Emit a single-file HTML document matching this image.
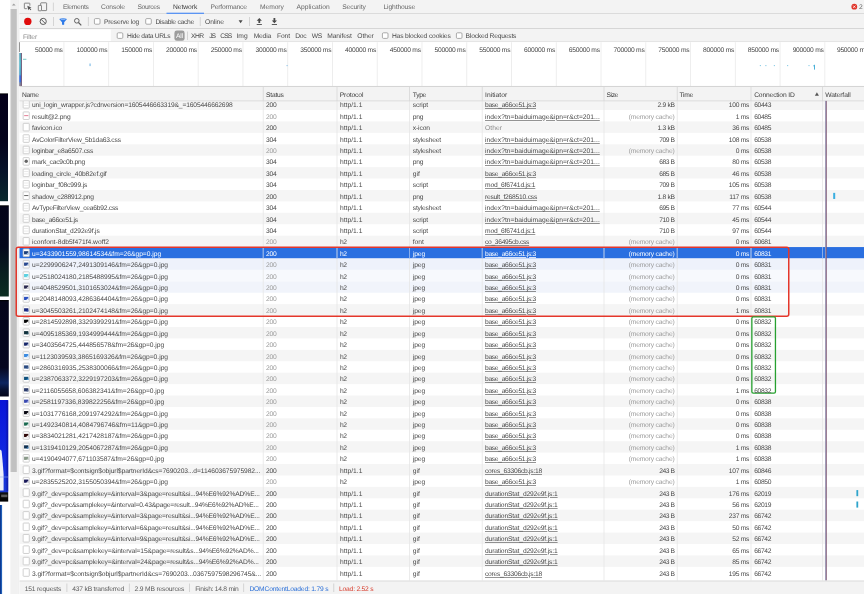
<!DOCTYPE html>
<html><head><meta charset="utf-8"><title>DevTools - Network</title>
<style>
html,body{margin:0;padding:0;background:#fff;}
body{width:864px;height:594px;overflow:hidden;position:relative;font-family:"Liberation Sans",sans-serif;font-size:6.7px;}
#r{position:absolute;left:0;top:0;width:864px;height:594px;overflow:hidden;text-rendering:geometricPrecision;will-change:transform;}
#r svg{position:absolute;left:0;top:0;}
#r div{position:absolute;line-height:10px;height:10px;white-space:pre;}
#r div.u{text-decoration:underline;text-decoration-thickness:0.5px;text-underline-offset:0.7px;text-decoration-color:rgba(60,60,60,.55);}
#r div.s{text-decoration-color:rgba(255,255,255,.8);}
</style></head><body><div id="r">
<svg width="864" height="594" viewBox="0 0 864 594"><defs><linearGradient id="g1" x1="0" y1="0" x2="0" y2="1"><stop offset="0" stop-color="#000"/><stop offset="0.015" stop-color="#04001a"/><stop offset="0.45" stop-color="#05031c"/><stop offset="0.7" stop-color="#07122a"/><stop offset="1" stop-color="#0a2a2e"/></linearGradient><linearGradient id="g2" x1="0" y1="0" x2="0" y2="1"><stop offset="0" stop-color="#000"/><stop offset="0.02" stop-color="#04051a"/><stop offset="0.45" stop-color="#05081c"/><stop offset="0.75" stop-color="#08201f"/><stop offset="1" stop-color="#0c2e22"/></linearGradient><linearGradient id="g3" x1="0" y1="0" x2="0" y2="1"><stop offset="0" stop-color="#000"/><stop offset="0.02" stop-color="#04041a"/><stop offset="0.7" stop-color="#060720"/><stop offset="0.86" stop-color="#0d2560"/><stop offset="0.93" stop-color="#071030"/><stop offset="1" stop-color="#03051a"/></linearGradient><linearGradient id="g4" x1="0" y1="0" x2="0" y2="1"><stop offset="0" stop-color="#0a14d8"/><stop offset="0.45" stop-color="#1024e0"/><stop offset="0.9" stop-color="#1a3ad8"/><stop offset="0.915" stop-color="#101010"/><stop offset="1" stop-color="#000"/></linearGradient><linearGradient id="g5" x1="0" y1="0" x2="1" y2="0"><stop offset="0" stop-color="#0a2a80"/><stop offset="0.5" stop-color="#0d4aa8"/><stop offset="1" stop-color="#3a7ac8"/></linearGradient><linearGradient id="g6" x1="0" y1="0" x2="1" y2="0"><stop offset="0" stop-color="rgba(8,12,150,0)"/><stop offset="1" stop-color="rgba(8,12,150,.75)"/></linearGradient><linearGradient id="g7" x1="0" y1="0" x2="0" y2="1"><stop offset="0" stop-color="#5aa0b8"/><stop offset="0.3" stop-color="#58b8c8"/><stop offset="0.65" stop-color="#4aa0c8"/><stop offset="0.7" stop-color="#3a6ad8"/><stop offset="0.87" stop-color="#3a6ad8"/><stop offset="0.9" stop-color="#6a80a0"/><stop offset="1" stop-color="#8a7a8a"/></linearGradient></defs>
<rect x="0" y="93.4" width="8" height="107.8" fill="url(#g1)"/>
<rect x="0" y="205.3" width="8.8" height="91.2" fill="url(#g2)"/>
<rect x="0" y="300" width="8.8" height="96.5" fill="url(#g3)"/>
<rect x="0" y="400" width="8.2" height="101.6" fill="url(#g4)"/>
<rect x="0" y="505" width="2.1" height="89" fill="url(#g5)"/>
<rect x="5.2" y="400.6" width="3" height="90.8" fill="url(#g6)"/>
<path d="M0 449.5L1.6 450.8L2.5 460L3.6 474V490.6H0Z" fill="#eef0f8"/>
<rect x="0" y="476.6" width="8.2" height="0.8" fill="#8aa6f0" opacity="0.7"/>
<rect x="1.2" y="494.6" width="6.2" height="2.6" fill="#9a9a9a" opacity="0.55"/>
<rect x="10.4" y="0" width="6.8" height="594" fill="#f1f1f1"/>
<rect x="10.4" y="9" width="6.8" height="463" fill="#d2d2d2"/>
<rect x="11.2" y="9" width="5.2" height="463" fill="#c1c1c1"/>
<path d="M11.9 5.6 L13.8 3.6 L15.7 5.6 Z" fill="#a0a0a0"/>
<rect x="17.2" y="0" width="2.3" height="594" fill="#f0f0f0"/>
<rect x="19.5" y="0" width="844.5" height="594" fill="#fff"/>
<rect x="19.5" y="0" width="844.5" height="13.8" fill="#f3f3f3"/>
<rect x="19.5" y="13.35" width="844.5" height="0.9" fill="#cccccc"/>
<g transform="translate(23.7 2.5) scale(.933)" fill="none"><path d="M6.6 3.4V1.2a.5.5 0 0 0-.5-.5H1.2a.5.5 0 0 0-.5.5v4.9a.5.5 0 0 0 .5.5h2.2" stroke="#6a6a6a" stroke-width=".85"/>
<path d="M3.9 3.6l.9 4.6 1.1-1.5 1.5 1.7.8-.7-1.5-1.7 1.7-.6z" fill="#555"/></g>
<g transform="translate(37.6 2.2)" fill="none"><path d="M3.1 3V1.1a.5.5 0 0 1 .5-.5h4.9a.5.5 0 0 1 .5.5v6.8a.5.5 0 0 1-.5.5H4.2" stroke="#6a6a6a" stroke-width=".8"/>
<rect x=".7" y="3.2" width="3.2" height="5.4" rx=".5" stroke="#6a6a6a" stroke-width=".8"/></g>
<rect x="52.9" y="2.6" width="0.8" height="8.4" fill="#cccccc"/>
<rect x="166.5" y="12.7" width="37.5" height="1.2" fill="#4d8df6"/>
<circle cx="854.3" cy="6.7" r="2.9" fill="#e0352b"/><path d="M853.2 5.6L855.4 7.8M855.4 5.6L853.2 7.8" stroke="#fff" stroke-width=".8"/>
<rect x="19.5" y="14.25" width="844.5" height="14.4" fill="#f3f3f3"/>
<rect x="19.5" y="28.25" width="844.5" height="0.9" fill="#cccccc"/>
<circle cx="27.8" cy="21.4" r="3.7" fill="#e00b0b"/>
<circle cx="43.2" cy="21.4" r="3.1" fill="none" stroke="#555" stroke-width=".95"/><path d="M41.1 19.3L45.3 23.5" stroke="#555" stroke-width=".95"/>
<rect x="53.2" y="17" width="0.8" height="9" fill="#cccccc"/>
<g transform="translate(59 18)"><path d="M.2 .9 Q4.1 -.6 8 .9 L5.2 4.2 V6.6 Q4.1 7.4 3 6.6 V4.2 Z" fill="#2f7be8"/><ellipse cx="4.1" cy="1.2" rx="2.6" ry=".55" fill="#9cc2f7"/></g>
<g transform="translate(73.6 17.6)" fill="none"><circle cx="3.2" cy="3.2" r="2.3" stroke="#5a5a5a" stroke-width=".95"/><path d="M4.9 4.9L7.7 7.7" stroke="#5a5a5a" stroke-width="1.15"/></g>
<rect x="87.9" y="17" width="0.8" height="9" fill="#cccccc"/>
<rect x="94.4" y="18.6" width="5.6" height="5.6" fill="#fff" rx="1.1" stroke="#959595" stroke-width="0.8"/>
<rect x="145.7" y="18.6" width="5.6" height="5.6" fill="#fff" rx="1.1" stroke="#959595" stroke-width="0.8"/>
<rect x="199.8" y="17" width="0.8" height="9" fill="#cccccc"/>
<path d="M238.6 20.2H242.6L240.6 23.2Z" fill="#4a4a4a"/>
<rect x="249.1" y="17" width="0.8" height="9" fill="#cccccc"/>
<g transform="translate(256.3 17.8)" fill="#4a4a4a"><path d="M3 .2L5.6 3H3.9V5.3H2.1V3H.4Z"/><rect x=".4" y="6.3" width="5.2" height=".9"/></g>
<g transform="translate(271.4 17.8)" fill="#4a4a4a"><path d="M3 5.4L5.6 2.6H3.9V.3H2.1V2.6H.4Z"/><rect x=".4" y="6.3" width="5.2" height=".9"/></g>
<rect x="19.5" y="29.15" width="844.5" height="12.6" fill="#f3f3f3"/>
<rect x="20" y="29.4" width="90.8" height="12" fill="#fff"/>
<rect x="19.5" y="41.4" width="844.5" height="0.8" fill="#dadada"/>
<rect x="117.2" y="32.8" width="5.6" height="5.6" fill="#fff" rx="1.1" stroke="#959595" stroke-width="0.8"/>
<rect x="174.4" y="30.6" width="10.2" height="10.2" fill="#9d9d9d" rx="2.4"/>
<rect x="187.2" y="31.5" width="0.8" height="8.5" fill="#cccccc"/>
<rect x="382.4" y="32.8" width="5.6" height="5.6" fill="#fff" rx="1.1" stroke="#959595" stroke-width="0.8"/>
<rect x="456.4" y="32.8" width="5.6" height="5.6" fill="#fff" rx="1.1" stroke="#959595" stroke-width="0.8"/>
<rect x="19.5" y="42.2" width="844.5" height="44" fill="#fff"/>
<rect x="63.46" y="42.2" width="0.9" height="44" fill="#ececec"/>
<rect x="108.22" y="42.2" width="0.9" height="44" fill="#ececec"/>
<rect x="152.98" y="42.2" width="0.9" height="44" fill="#ececec"/>
<rect x="197.74" y="42.2" width="0.9" height="44" fill="#ececec"/>
<rect x="242.5" y="42.2" width="0.9" height="44" fill="#ececec"/>
<rect x="287.26" y="42.2" width="0.9" height="44" fill="#ececec"/>
<rect x="332.02" y="42.2" width="0.9" height="44" fill="#ececec"/>
<rect x="376.78" y="42.2" width="0.9" height="44" fill="#ececec"/>
<rect x="421.54" y="42.2" width="0.9" height="44" fill="#ececec"/>
<rect x="466.3" y="42.2" width="0.9" height="44" fill="#ececec"/>
<rect x="511.06" y="42.2" width="0.9" height="44" fill="#ececec"/>
<rect x="555.82" y="42.2" width="0.9" height="44" fill="#ececec"/>
<rect x="600.58" y="42.2" width="0.9" height="44" fill="#ececec"/>
<rect x="645.34" y="42.2" width="0.9" height="44" fill="#ececec"/>
<rect x="690.1" y="42.2" width="0.9" height="44" fill="#ececec"/>
<rect x="734.86" y="42.2" width="0.9" height="44" fill="#ececec"/>
<rect x="779.62" y="42.2" width="0.9" height="44" fill="#ececec"/>
<rect x="824.38" y="42.2" width="0.9" height="44" fill="#ececec"/>
<rect x="19.1" y="42.2" width="0.7" height="9.8" fill="#6a6a6a"/>
<rect x="19.2" y="53" width="2.1" height="33" fill="url(#g7)"/>
<rect x="21.2" y="53" width="0.75" height="33" fill="#5a3a5e"/>
<rect x="23" y="58.8" width="3.4" height="0.9" fill="#6cc4c0"/>
<rect x="89.6" y="63.5" width="0.9" height="2.6" fill="#58a8e0"/>
<rect x="286.6" y="65.2" width="0.9" height="0.9" fill="#58a8e0"/>
<rect x="759.85" y="65.2" width="0.9" height="0.9" fill="#4ab0d8"/>
<rect x="765.45" y="65.2" width="0.9" height="0.9" fill="#4ab0d8"/>
<rect x="773.85" y="65.2" width="0.9" height="0.9" fill="#4ab0d8"/>
<rect x="787.25" y="65.2" width="0.9" height="0.9" fill="#4ab0d8"/>
<rect x="808.55" y="65.2" width="0.9" height="0.9" fill="#4ab0d8"/>
<rect x="814" y="64.8" width="1" height="4.8" fill="#4ab0d8"/>
<rect x="813.2" y="65.4" width="0.9" height="0.9" fill="#4ab0d8"/>
<rect x="19.5" y="98.6" width="844.5" height="11.42" fill="#f5f5f5"/>
<rect x="19.5" y="121.44" width="844.5" height="11.42" fill="#f5f5f5"/>
<rect x="19.5" y="144.28" width="844.5" height="11.42" fill="#f5f5f5"/>
<rect x="19.5" y="167.12" width="844.5" height="11.42" fill="#f5f5f5"/>
<rect x="19.5" y="189.96" width="844.5" height="11.42" fill="#f5f5f5"/>
<rect x="19.5" y="212.8" width="844.5" height="11.42" fill="#f5f5f5"/>
<rect x="19.5" y="235.64" width="844.5" height="11.42" fill="#f5f5f5"/>
<rect x="19.5" y="247.06" width="844.5" height="11.42" fill="#2a6fe0"/>
<rect x="19.5" y="258.48" width="844.5" height="11.42" fill="#eef2fb"/>
<rect x="19.5" y="269.9" width="844.5" height="11.42" fill="#f7f9fd"/>
<rect x="19.5" y="281.32" width="844.5" height="11.42" fill="#f1f4fb"/>
<rect x="19.5" y="304.16" width="844.5" height="11.42" fill="#f5f5f5"/>
<rect x="19.5" y="327" width="844.5" height="11.42" fill="#f5f5f5"/>
<rect x="19.5" y="349.84" width="844.5" height="11.42" fill="#f5f5f5"/>
<rect x="19.5" y="372.68" width="844.5" height="11.42" fill="#f5f5f5"/>
<rect x="19.5" y="395.52" width="844.5" height="11.42" fill="#f5f5f5"/>
<rect x="19.5" y="418.36" width="844.5" height="11.42" fill="#f5f5f5"/>
<rect x="19.5" y="441.2" width="844.5" height="11.42" fill="#f5f5f5"/>
<rect x="19.5" y="464.04" width="844.5" height="11.42" fill="#f5f5f5"/>
<rect x="19.5" y="486.88" width="844.5" height="11.42" fill="#f5f5f5"/>
<rect x="19.5" y="509.72" width="844.5" height="11.42" fill="#f5f5f5"/>
<rect x="19.5" y="532.56" width="844.5" height="11.42" fill="#f5f5f5"/>
<rect x="19.5" y="555.4" width="844.5" height="11.42" fill="#f5f5f5"/>
<rect x="262.8" y="100.9" width="0.8" height="479.7" fill="#e6e6e6"/>
<rect x="262.8" y="247.06" width="0.8" height="11.42" fill="#7aa5ec"/>
<rect x="336.6" y="100.9" width="0.8" height="479.7" fill="#e6e6e6"/>
<rect x="336.6" y="247.06" width="0.8" height="11.42" fill="#7aa5ec"/>
<rect x="409.2" y="100.9" width="0.8" height="479.7" fill="#e6e6e6"/>
<rect x="409.2" y="247.06" width="0.8" height="11.42" fill="#7aa5ec"/>
<rect x="481.8" y="100.9" width="0.8" height="479.7" fill="#e6e6e6"/>
<rect x="481.8" y="247.06" width="0.8" height="11.42" fill="#7aa5ec"/>
<rect x="603.6" y="100.9" width="0.8" height="479.7" fill="#e6e6e6"/>
<rect x="603.6" y="247.06" width="0.8" height="11.42" fill="#7aa5ec"/>
<rect x="676.8" y="100.9" width="0.8" height="479.7" fill="#e6e6e6"/>
<rect x="676.8" y="247.06" width="0.8" height="11.42" fill="#7aa5ec"/>
<rect x="750.6" y="100.9" width="0.8" height="479.7" fill="#e6e6e6"/>
<rect x="750.6" y="247.06" width="0.8" height="11.42" fill="#7aa5ec"/>
<rect x="822.2" y="100.9" width="0.8" height="479.7" fill="#e6e6e6"/>
<rect x="822.2" y="247.06" width="0.8" height="11.42" fill="#7aa5ec"/>
<rect x="23.15" y="100.5" width="6.1" height="7.6" fill="#fff" rx="0.6" stroke="#c4c4c4" stroke-width="0.8"/>
<rect x="24.05" y="102.7" width="4.3" height="0.7" fill="#e2e2e2"/>
<rect x="24.05" y="105.1" width="4.3" height="0.7" fill="#e2e2e2"/>
<rect x="23.15" y="111.92" width="6.1" height="7.6" fill="#fff" rx="0.6" stroke="#c4c4c4" stroke-width="0.8"/>
<rect x="24.15" y="115.22" width="4.2" height="0.9" fill="#e0708a"/>
<rect x="23.15" y="123.34" width="6.1" height="7.6" fill="#fff" rx="0.6" stroke="#c4c4c4" stroke-width="0.8"/>
<rect x="23.15" y="134.76" width="6.1" height="7.6" fill="#fff" rx="0.6" stroke="#c4c4c4" stroke-width="0.8"/>
<rect x="24.05" y="136.96" width="4.3" height="0.7" fill="#e2e2e2"/>
<rect x="24.05" y="139.36" width="4.3" height="0.7" fill="#e2e2e2"/>
<rect x="23.15" y="146.18" width="6.1" height="7.6" fill="#fff" rx="0.6" stroke="#c4c4c4" stroke-width="0.8"/>
<rect x="24.05" y="148.38" width="4.3" height="0.7" fill="#e2e2e2"/>
<rect x="24.05" y="150.78" width="4.3" height="0.7" fill="#e2e2e2"/>
<rect x="23.15" y="157.6" width="6.1" height="7.6" fill="#fff" rx="0.6" stroke="#c4c4c4" stroke-width="0.8"/>
<circle cx="26.2" cy="161.3" r="1.7" fill="#666"/>
<rect x="23.15" y="169.02" width="6.1" height="7.6" fill="#fff" rx="0.6" stroke="#c4c4c4" stroke-width="0.8"/>
<rect x="24.05" y="171.22" width="4.3" height="0.7" fill="#e2e2e2"/>
<rect x="24.05" y="173.62" width="4.3" height="0.7" fill="#e2e2e2"/>
<rect x="23.15" y="180.44" width="6.1" height="7.6" fill="#fff" rx="0.6" stroke="#c4c4c4" stroke-width="0.8"/>
<rect x="24.05" y="182.64" width="4.3" height="0.7" fill="#e2e2e2"/>
<rect x="24.05" y="185.04" width="4.3" height="0.7" fill="#e2e2e2"/>
<rect x="23.15" y="191.86" width="6.1" height="7.6" fill="#fff" rx="0.6" stroke="#c4c4c4" stroke-width="0.8"/>
<rect x="24.15" y="195.16" width="4.2" height="0.9" fill="#555"/>
<rect x="23.15" y="203.28" width="6.1" height="7.6" fill="#fff" rx="0.6" stroke="#c4c4c4" stroke-width="0.8"/>
<rect x="24.05" y="205.48" width="4.3" height="0.7" fill="#e2e2e2"/>
<rect x="24.05" y="207.88" width="4.3" height="0.7" fill="#e2e2e2"/>
<rect x="23.15" y="214.7" width="6.1" height="7.6" fill="#fff" rx="0.6" stroke="#c4c4c4" stroke-width="0.8"/>
<rect x="24.05" y="216.9" width="4.3" height="0.7" fill="#e2e2e2"/>
<rect x="24.05" y="219.3" width="4.3" height="0.7" fill="#e2e2e2"/>
<rect x="23.15" y="226.12" width="6.1" height="7.6" fill="#fff" rx="0.6" stroke="#c4c4c4" stroke-width="0.8"/>
<rect x="24.05" y="228.32" width="4.3" height="0.7" fill="#e2e2e2"/>
<rect x="24.05" y="230.72" width="4.3" height="0.7" fill="#e2e2e2"/>
<rect x="23.15" y="237.54" width="6.1" height="7.6" fill="#fff" rx="0.6" stroke="#c4c4c4" stroke-width="0.8"/>
<rect x="23.15" y="248.96" width="6.1" height="7.6" fill="#fff" rx="0.6" stroke="#c4c4c4" stroke-width="0.8"/>
<rect x="24.05" y="251.16" width="4.3" height="3.2" fill="#1d3f7a"/>
<path d="M28.35 252.36V254.36H26.15Z" fill="#9fc0e8"/>
<rect x="23.15" y="260.38" width="6.1" height="7.6" fill="#fff" rx="0.6" stroke="#c4c4c4" stroke-width="0.8"/>
<rect x="24.05" y="262.58" width="4.3" height="3.2" fill="#2a4a90"/>
<path d="M28.35 263.78V265.78H26.15Z" fill="#dfe8f6"/>
<rect x="23.15" y="271.8" width="6.1" height="7.6" fill="#fff" rx="0.6" stroke="#c4c4c4" stroke-width="0.8"/>
<rect x="24.05" y="274" width="4.3" height="3.2" fill="#5cd0e0"/>
<path d="M28.35 275.2V277.2H26.15Z" fill="#c8f2f6"/>
<rect x="23.15" y="283.22" width="6.1" height="7.6" fill="#fff" rx="0.6" stroke="#c4c4c4" stroke-width="0.8"/>
<rect x="24.05" y="285.42" width="4.3" height="3.2" fill="#2a2a50"/>
<path d="M28.35 286.62V288.62H26.15Z" fill="#ffffff"/>
<rect x="23.15" y="294.64" width="6.1" height="7.6" fill="#fff" rx="0.6" stroke="#c4c4c4" stroke-width="0.8"/>
<rect x="24.05" y="296.84" width="4.3" height="3.2" fill="#2a50c0"/>
<path d="M28.35 298.04V300.04H26.15Z" fill="#e8eefc"/>
<rect x="23.15" y="306.06" width="6.1" height="7.6" fill="#fff" rx="0.6" stroke="#c4c4c4" stroke-width="0.8"/>
<rect x="24.05" y="308.26" width="4.3" height="3.2" fill="#1a2a80"/>
<path d="M28.35 309.46V311.46H26.15Z" fill="#3a50b0"/>
<rect x="23.15" y="317.48" width="6.1" height="7.6" fill="#fff" rx="0.6" stroke="#c4c4c4" stroke-width="0.8"/>
<rect x="24.05" y="319.68" width="4.3" height="3.2" fill="#050505"/>
<path d="M28.35 320.88V322.88H26.15Z" fill="#ffffff"/>
<rect x="23.15" y="328.9" width="6.1" height="7.6" fill="#fff" rx="0.6" stroke="#c4c4c4" stroke-width="0.8"/>
<rect x="24.05" y="331.1" width="4.3" height="3.2" fill="#10303a"/>
<path d="M28.35 332.3V334.3H26.15Z" fill="#205060"/>
<rect x="23.15" y="340.32" width="6.1" height="7.6" fill="#fff" rx="0.6" stroke="#c4c4c4" stroke-width="0.8"/>
<rect x="24.05" y="342.52" width="4.3" height="3.2" fill="#18286a"/>
<path d="M28.35 343.72V345.72H26.15Z" fill="#dfe6f6"/>
<rect x="23.15" y="351.74" width="6.1" height="7.6" fill="#fff" rx="0.6" stroke="#c4c4c4" stroke-width="0.8"/>
<rect x="24.05" y="353.94" width="4.3" height="3.2" fill="#3a8ae0"/>
<path d="M28.35 355.14V357.14H26.15Z" fill="#cfe4fa"/>
<rect x="23.15" y="363.16" width="6.1" height="7.6" fill="#fff" rx="0.6" stroke="#c4c4c4" stroke-width="0.8"/>
<rect x="24.05" y="365.36" width="4.3" height="3.2" fill="#2a4a80"/>
<path d="M28.35 366.56V368.56H26.15Z" fill="#4a6aa0"/>
<rect x="23.15" y="374.58" width="6.1" height="7.6" fill="#fff" rx="0.6" stroke="#c4c4c4" stroke-width="0.8"/>
<rect x="24.05" y="376.78" width="4.3" height="3.2" fill="#10507a"/>
<path d="M28.35 377.98V379.98H26.15Z" fill="#3a90d0"/>
<rect x="23.15" y="386" width="6.1" height="7.6" fill="#fff" rx="0.6" stroke="#c4c4c4" stroke-width="0.8"/>
<rect x="24.05" y="388.2" width="4.3" height="3.2" fill="#2a3a6a"/>
<path d="M28.35 389.4V391.4H26.15Z" fill="#6a7aa0"/>
<rect x="23.15" y="397.42" width="6.1" height="7.6" fill="#fff" rx="0.6" stroke="#c4c4c4" stroke-width="0.8"/>
<rect x="24.05" y="399.62" width="4.3" height="3.2" fill="#3a4ab0"/>
<path d="M28.35 400.82V402.82H26.15Z" fill="#c0c8f0"/>
<rect x="23.15" y="408.84" width="6.1" height="7.6" fill="#fff" rx="0.6" stroke="#c4c4c4" stroke-width="0.8"/>
<rect x="24.05" y="411.04" width="4.3" height="3.2" fill="#060610"/>
<path d="M28.35 412.24V414.24H26.15Z" fill="#ffffff"/>
<rect x="23.15" y="420.26" width="6.1" height="7.6" fill="#fff" rx="0.6" stroke="#c4c4c4" stroke-width="0.8"/>
<rect x="24.05" y="422.46" width="4.3" height="3.2" fill="#1a6a50"/>
<path d="M28.35 423.66V425.66H26.15Z" fill="#ffffff"/>
<rect x="23.15" y="431.68" width="6.1" height="7.6" fill="#fff" rx="0.6" stroke="#c4c4c4" stroke-width="0.8"/>
<rect x="24.05" y="433.88" width="4.3" height="3.2" fill="#300808"/>
<path d="M28.35 435.08V437.08H26.15Z" fill="#ffffff"/>
<rect x="23.15" y="443.1" width="6.1" height="7.6" fill="#fff" rx="0.6" stroke="#c4c4c4" stroke-width="0.8"/>
<rect x="24.05" y="445.3" width="4.3" height="3.2" fill="#103050"/>
<path d="M28.35 446.5V448.5H26.15Z" fill="#3a80c0"/>
<rect x="23.15" y="454.52" width="6.1" height="7.6" fill="#fff" rx="0.6" stroke="#c4c4c4" stroke-width="0.8"/>
<rect x="24.05" y="456.72" width="4.3" height="3.2" fill="#8a9a8a"/>
<path d="M28.35 457.92V459.92H26.15Z" fill="#c8d0c8"/>
<rect x="23.15" y="465.94" width="6.1" height="7.6" fill="#fff" rx="0.6" stroke="#c4c4c4" stroke-width="0.8"/>
<rect x="23.15" y="477.36" width="6.1" height="7.6" fill="#fff" rx="0.6" stroke="#c4c4c4" stroke-width="0.8"/>
<rect x="24.05" y="479.56" width="4.3" height="3.2" fill="#1a1a5a"/>
<path d="M28.35 480.76V482.76H26.15Z" fill="#ffffff"/>
<rect x="23.15" y="488.78" width="6.1" height="7.6" fill="#fff" rx="0.6" stroke="#c4c4c4" stroke-width="0.8"/>
<rect x="23.15" y="500.2" width="6.1" height="7.6" fill="#fff" rx="0.6" stroke="#c4c4c4" stroke-width="0.8"/>
<rect x="23.15" y="511.62" width="6.1" height="7.6" fill="#fff" rx="0.6" stroke="#c4c4c4" stroke-width="0.8"/>
<rect x="23.15" y="523.04" width="6.1" height="7.6" fill="#fff" rx="0.6" stroke="#c4c4c4" stroke-width="0.8"/>
<rect x="23.15" y="534.46" width="6.1" height="7.6" fill="#fff" rx="0.6" stroke="#c4c4c4" stroke-width="0.8"/>
<rect x="23.15" y="545.88" width="6.1" height="7.6" fill="#fff" rx="0.6" stroke="#c4c4c4" stroke-width="0.8"/>
<rect x="23.15" y="557.3" width="6.1" height="7.6" fill="#fff" rx="0.6" stroke="#c4c4c4" stroke-width="0.8"/>
<rect x="23.15" y="568.72" width="6.1" height="7.6" fill="#fff" rx="0.6" stroke="#c4c4c4" stroke-width="0.8"/>
<rect x="19.5" y="86.4" width="844.5" height="14.5" fill="#f3f3f3"/>
<rect x="19.5" y="85.95" width="844.5" height="0.9" fill="#cfcfcf"/>
<rect x="19.5" y="100.5" width="844.5" height="0.8" fill="#d8d8d8"/>
<rect x="262.8" y="86.4" width="0.8" height="14.5" fill="#d6d6d6"/>
<rect x="336.6" y="86.4" width="0.8" height="14.5" fill="#d6d6d6"/>
<rect x="409.2" y="86.4" width="0.8" height="14.5" fill="#d6d6d6"/>
<rect x="481.8" y="86.4" width="0.8" height="14.5" fill="#d6d6d6"/>
<rect x="603.6" y="86.4" width="0.8" height="14.5" fill="#d6d6d6"/>
<rect x="676.8" y="86.4" width="0.8" height="14.5" fill="#d6d6d6"/>
<rect x="750.6" y="86.4" width="0.8" height="14.5" fill="#d6d6d6"/>
<rect x="822.2" y="86.4" width="0.8" height="14.5" fill="#d6d6d6"/>
<path d="M814.9 95.7H818.9L816.9 92.3Z" fill="#555"/>
<rect x="825" y="100.9" width="0.9" height="479.7" fill="#9a9ab8"/>
<rect x="825.9" y="100.9" width="0.9" height="479.7" fill="#86607c"/>
<rect x="833.2" y="192.86" width="2" height="6.1" fill="#3aaee0"/>
<rect x="856.4" y="490.08" width="1.8" height="6.1" fill="#2ea4cc"/>
<rect x="856.4" y="501.5" width="1.8" height="6.1" fill="#2ea4cc"/>
<rect x="19.5" y="580.7" width="844.5" height="13.3" fill="#f3f3f3"/>
<rect x="19.5" y="580.6" width="844.5" height="0.8" fill="#d4d4d4"/>
<rect x="66.5" y="583.5" width="0.8" height="8.5" fill="#cccccc"/>
<rect x="128.9" y="583.5" width="0.8" height="8.5" fill="#cccccc"/>
<rect x="189.2" y="583.5" width="0.8" height="8.5" fill="#cccccc"/>
<rect x="243.3" y="583.5" width="0.8" height="8.5" fill="#cccccc"/>
<rect x="333.4" y="583.5" width="0.8" height="8.5" fill="#cccccc"/>
<rect x="16.25" y="247.15" width="772.5" height="69.2" fill="none" rx="2" stroke="#e4372b" stroke-width="1.5"/>
<rect x="751.85" y="316.95" width="23.6" height="76.2" fill="none" rx="1.4" stroke="#27a030" stroke-width="1.3"/>
</svg>
<div style="top:3.20px;color:#666;left:859.00px;">2</div>
<div style="top:3.30px;color:#666;left:63.00px;letter-spacing:-0.286px;">Elements</div>
<div style="top:3.30px;color:#666;left:101.00px;letter-spacing:-0.107px;">Console</div>
<div style="top:3.30px;color:#666;left:137.40px;letter-spacing:-0.307px;">Sources</div>
<div style="top:3.30px;color:#3a3a3a;left:173.00px;letter-spacing:-0.047px;">Network</div>
<div style="top:3.30px;color:#666;left:210.50px;letter-spacing:-0.182px;">Performance</div>
<div style="top:3.30px;color:#666;left:260.00px;letter-spacing:-0.059px;">Memory</div>
<div style="top:3.30px;color:#666;left:296.50px;letter-spacing:0.053px;">Application</div>
<div style="top:3.30px;color:#666;left:342.20px;letter-spacing:-0.084px;">Security</div>
<div style="top:3.30px;color:#666;left:383.50px;letter-spacing:-0.123px;">Lighthouse</div>
<div style="top:17.80px;color:#4a4a4a;left:104.00px;letter-spacing:-0.212px;">Preserve log</div>
<div style="top:17.80px;color:#4a4a4a;left:155.40px;letter-spacing:-0.270px;">Disable cache</div>
<div style="top:17.80px;color:#4a4a4a;left:205.00px;letter-spacing:-0.074px;">Online</div>
<div style="top:32.60px;color:#8a8a8a;left:23.00px;letter-spacing:-0.146px;">Filter</div>
<div style="top:32.10px;color:#4a4a4a;left:127.00px;letter-spacing:-0.273px;">Hide data URLs</div>
<div style="top:32.10px;color:#fff;left:175.90px;letter-spacing:-0.046px;">All</div>
<div style="top:32.10px;color:#4a4a4a;left:191.00px;letter-spacing:-0.542px;">XHR</div>
<div style="top:32.10px;color:#4a4a4a;left:209.30px;letter-spacing:-1.156px;">JS</div>
<div style="top:32.10px;color:#4a4a4a;left:220.20px;letter-spacing:-0.889px;">CSS</div>
<div style="top:32.10px;color:#4a4a4a;left:236.50px;letter-spacing:-0.019px;">Img</div>
<div style="top:32.10px;color:#4a4a4a;left:253.70px;letter-spacing:-0.184px;">Media</div>
<div style="top:32.10px;color:#4a4a4a;left:277.00px;letter-spacing:-0.123px;">Font</div>
<div style="top:32.10px;color:#4a4a4a;left:295.30px;letter-spacing:-0.269px;">Doc</div>
<div style="top:32.10px;color:#4a4a4a;left:311.80px;letter-spacing:-0.391px;">WS</div>
<div style="top:32.10px;color:#4a4a4a;left:327.20px;letter-spacing:-0.073px;">Manifest</div>
<div style="top:32.10px;color:#4a4a4a;left:357.30px;letter-spacing:-0.047px;">Other</div>
<div style="top:32.10px;color:#4a4a4a;left:391.90px;letter-spacing:-0.139px;">Has blocked cookies</div>
<div style="top:32.10px;color:#4a4a4a;left:465.60px;letter-spacing:-0.207px;">Blocked Requests</div>
<div style="top:45.50px;color:#444;left:34.91px;letter-spacing:-0.197px;">50000 ms</div>
<div style="top:45.50px;color:#444;left:76.47px;letter-spacing:-0.233px;">100000 ms</div>
<div style="top:45.50px;color:#444;left:121.23px;letter-spacing:-0.233px;">150000 ms</div>
<div style="top:45.50px;color:#444;left:165.99px;letter-spacing:-0.233px;">200000 ms</div>
<div style="top:45.50px;color:#444;left:210.75px;letter-spacing:-0.233px;">250000 ms</div>
<div style="top:45.50px;color:#444;left:255.51px;letter-spacing:-0.233px;">300000 ms</div>
<div style="top:45.50px;color:#444;left:300.27px;letter-spacing:-0.233px;">350000 ms</div>
<div style="top:45.50px;color:#444;left:345.03px;letter-spacing:-0.233px;">400000 ms</div>
<div style="top:45.50px;color:#444;left:389.79px;letter-spacing:-0.233px;">450000 ms</div>
<div style="top:45.50px;color:#444;left:434.55px;letter-spacing:-0.233px;">500000 ms</div>
<div style="top:45.50px;color:#444;left:479.31px;letter-spacing:-0.233px;">550000 ms</div>
<div style="top:45.50px;color:#444;left:524.07px;letter-spacing:-0.233px;">600000 ms</div>
<div style="top:45.50px;color:#444;left:568.83px;letter-spacing:-0.233px;">650000 ms</div>
<div style="top:45.50px;color:#444;left:613.59px;letter-spacing:-0.233px;">700000 ms</div>
<div style="top:45.50px;color:#444;left:658.35px;letter-spacing:-0.233px;">750000 ms</div>
<div style="top:45.50px;color:#444;left:703.11px;letter-spacing:-0.233px;">800000 ms</div>
<div style="top:45.50px;color:#444;left:747.87px;letter-spacing:-0.233px;">850000 ms</div>
<div style="top:45.50px;color:#444;left:792.63px;letter-spacing:-0.233px;">900000 ms</div>
<div style="top:45.50px;color:#444;left:836.90px;letter-spacing:-0.233px;">950000 ms</div>
<div style="top:90.70px;color:#3a3a3a;left:22.00px;letter-spacing:-0.261px;">Name</div>
<div style="top:90.70px;color:#3a3a3a;left:266.10px;letter-spacing:-0.220px;">Status</div>
<div style="top:90.70px;color:#3a3a3a;left:339.70px;letter-spacing:-0.118px;">Protocol</div>
<div style="top:90.70px;color:#3a3a3a;left:412.80px;letter-spacing:-0.325px;">Type</div>
<div style="top:90.70px;color:#3a3a3a;left:485.00px;letter-spacing:0.029px;">Initiator</div>
<div style="top:90.70px;color:#3a3a3a;left:606.40px;letter-spacing:-0.354px;">Size</div>
<div style="top:90.70px;color:#3a3a3a;left:679.60px;letter-spacing:-0.306px;">Time</div>
<div style="top:90.70px;color:#3a3a3a;left:754.20px;letter-spacing:-0.153px;">Connection ID</div>
<div style="top:90.70px;color:#3a3a3a;left:825.20px;letter-spacing:-0.082px;">Waterfall</div>
<div style="top:584.90px;color:#5a5a5a;left:24.70px;letter-spacing:-0.181px;">151 requests</div>
<div style="top:584.90px;color:#5a5a5a;left:72.20px;letter-spacing:-0.179px;">437 kB transferred</div>
<div style="top:584.90px;color:#5a5a5a;left:134.60px;letter-spacing:-0.169px;">2.9 MB resources</div>
<div style="top:584.90px;color:#5a5a5a;left:195.30px;letter-spacing:-0.257px;">Finish: 14.8 min</div>
<div style="top:584.90px;color:#2a6fd8;left:249.40px;letter-spacing:-0.174px;">DOMContentLoaded: 1.79 s</div>
<div style="top:584.90px;color:#d83a2a;left:339.10px;letter-spacing:-0.209px;">Load: 2.52 s</div>
<div style="top:101.30px;color:#484848;left:32.00px;letter-spacing:-0.150px;">uni_login_wrapper.js?cdnversion=1605446663319&amp;_=1605446662698</div>
<div style="top:101.30px;color:#484848;left:266.00px;letter-spacing:-0.167px;">200</div>
<div style="top:101.30px;color:#484848;left:339.90px;letter-spacing:0.023px;">http/1.1</div>
<div style="top:101.30px;color:#484848;left:412.80px;letter-spacing:-0.114px;">script</div>
<div style="top:101.30px;color:#484848;left:485.00px;letter-spacing:-0.303px;" class="u">base_a66ce51.js:3</div>
<div style="top:101.30px;color:#484848;right:189.50px;letter-spacing:-0.345px;">2.9 kB</div>
<div style="top:101.30px;color:#484848;right:115.00px;letter-spacing:-0.281px;">100 ms</div>
<div style="top:101.30px;color:#484848;left:754.20px;letter-spacing:-0.342px;">60443</div>
<div style="top:112.72px;color:#484848;left:32.00px;letter-spacing:-0.116px;">result@2.png</div>
<div style="top:112.72px;color:#9a9a9a;left:266.00px;letter-spacing:-0.167px;">200</div>
<div style="top:112.72px;color:#484848;left:339.90px;letter-spacing:0.023px;">http/1.1</div>
<div style="top:112.72px;color:#484848;left:412.80px;letter-spacing:-0.224px;">png</div>
<div style="top:112.72px;color:#484848;left:485.00px;letter-spacing:0.034px;" class="u">index?tn=baiduimage&amp;ipn=r&amp;ct=201...</div>
<div style="top:112.72px;color:#9a9a9a;right:189.50px;letter-spacing:-0.179px;">(memory cache)</div>
<div style="top:112.72px;color:#484848;right:115.00px;letter-spacing:-0.280px;">1 ms</div>
<div style="top:112.72px;color:#484848;left:754.20px;letter-spacing:-0.342px;">60485</div>
<div style="top:124.14px;color:#484848;left:32.00px;letter-spacing:-0.128px;">favicon.ico</div>
<div style="top:124.14px;color:#484848;left:266.00px;letter-spacing:-0.167px;">200</div>
<div style="top:124.14px;color:#484848;left:339.90px;letter-spacing:0.023px;">http/1.1</div>
<div style="top:124.14px;color:#484848;left:412.80px;letter-spacing:-0.130px;">x-icon</div>
<div style="top:124.14px;color:#8a8a8a;left:485.00px;letter-spacing:0.053px;">Other</div>
<div style="top:124.14px;color:#484848;right:189.50px;letter-spacing:-0.345px;">1.3 kB</div>
<div style="top:124.14px;color:#484848;right:115.00px;letter-spacing:-0.283px;">36 ms</div>
<div style="top:124.14px;color:#484848;left:754.20px;letter-spacing:-0.342px;">60485</div>
<div style="top:135.56px;color:#484848;left:32.00px;letter-spacing:-0.198px;">AvColorFilterView_5b1da63.css</div>
<div style="top:135.56px;color:#484848;left:266.00px;letter-spacing:-0.167px;">304</div>
<div style="top:135.56px;color:#484848;left:339.90px;letter-spacing:0.023px;">http/1.1</div>
<div style="top:135.56px;color:#484848;left:412.80px;letter-spacing:-0.202px;">stylesheet</div>
<div style="top:135.56px;color:#484848;left:485.00px;letter-spacing:0.034px;" class="u">index?tn=baiduimage&amp;ipn=r&amp;ct=201...</div>
<div style="top:135.56px;color:#484848;right:189.50px;letter-spacing:-0.457px;">709 B</div>
<div style="top:135.56px;color:#484848;right:115.00px;letter-spacing:-0.281px;">108 ms</div>
<div style="top:135.56px;color:#484848;left:754.20px;letter-spacing:-0.342px;">60538</div>
<div style="top:146.98px;color:#484848;left:32.00px;letter-spacing:-0.218px;">loginbar_e8a6507.css</div>
<div style="top:146.98px;color:#9a9a9a;left:266.00px;letter-spacing:-0.167px;">200</div>
<div style="top:146.98px;color:#484848;left:339.90px;letter-spacing:0.023px;">http/1.1</div>
<div style="top:146.98px;color:#484848;left:412.80px;letter-spacing:-0.202px;">stylesheet</div>
<div style="top:146.98px;color:#484848;left:485.00px;letter-spacing:0.034px;" class="u">index?tn=baiduimage&amp;ipn=r&amp;ct=201...</div>
<div style="top:146.98px;color:#9a9a9a;right:189.50px;letter-spacing:-0.179px;">(memory cache)</div>
<div style="top:146.98px;color:#484848;right:115.00px;letter-spacing:-0.280px;">0 ms</div>
<div style="top:146.98px;color:#484848;left:754.20px;letter-spacing:-0.342px;">60538</div>
<div style="top:158.40px;color:#484848;left:32.00px;letter-spacing:-0.213px;">mark_cac9c0b.png</div>
<div style="top:158.40px;color:#484848;left:266.00px;letter-spacing:-0.167px;">304</div>
<div style="top:158.40px;color:#484848;left:339.90px;letter-spacing:0.023px;">http/1.1</div>
<div style="top:158.40px;color:#484848;left:412.80px;letter-spacing:-0.224px;">png</div>
<div style="top:158.40px;color:#484848;left:485.00px;letter-spacing:0.034px;" class="u">index?tn=baiduimage&amp;ipn=r&amp;ct=201...</div>
<div style="top:158.40px;color:#484848;right:189.50px;letter-spacing:-0.457px;">683 B</div>
<div style="top:158.40px;color:#484848;right:115.00px;letter-spacing:-0.283px;">80 ms</div>
<div style="top:158.40px;color:#484848;left:754.20px;letter-spacing:-0.342px;">60538</div>
<div style="top:169.82px;color:#484848;left:32.00px;letter-spacing:-0.120px;">loading_circle_40b82ef.gif</div>
<div style="top:169.82px;color:#484848;left:266.00px;letter-spacing:-0.167px;">304</div>
<div style="top:169.82px;color:#484848;left:339.90px;letter-spacing:0.023px;">http/1.1</div>
<div style="top:169.82px;color:#484848;left:412.80px;letter-spacing:-0.059px;">gif</div>
<div style="top:169.82px;color:#484848;left:485.00px;letter-spacing:-0.303px;" class="u">base_a66ce51.js:3</div>
<div style="top:169.82px;color:#484848;right:189.50px;letter-spacing:-0.457px;">685 B</div>
<div style="top:169.82px;color:#484848;right:115.00px;letter-spacing:-0.283px;">46 ms</div>
<div style="top:169.82px;color:#484848;left:754.20px;letter-spacing:-0.342px;">60538</div>
<div style="top:181.24px;color:#484848;left:32.00px;letter-spacing:-0.147px;">loginbar_f08c999.js</div>
<div style="top:181.24px;color:#484848;left:266.00px;letter-spacing:-0.167px;">304</div>
<div style="top:181.24px;color:#484848;left:339.90px;letter-spacing:0.023px;">http/1.1</div>
<div style="top:181.24px;color:#484848;left:412.80px;letter-spacing:-0.114px;">script</div>
<div style="top:181.24px;color:#484848;left:485.00px;letter-spacing:-0.179px;" class="u">mod_6f6741d.js:1</div>
<div style="top:181.24px;color:#484848;right:189.50px;letter-spacing:-0.457px;">709 B</div>
<div style="top:181.24px;color:#484848;right:115.00px;letter-spacing:-0.281px;">105 ms</div>
<div style="top:181.24px;color:#484848;left:754.20px;letter-spacing:-0.342px;">60538</div>
<div style="top:192.66px;color:#484848;left:32.00px;letter-spacing:-0.206px;">shadow_c288912.png</div>
<div style="top:192.66px;color:#484848;left:266.00px;letter-spacing:-0.167px;">200</div>
<div style="top:192.66px;color:#484848;left:339.90px;letter-spacing:0.023px;">http/1.1</div>
<div style="top:192.66px;color:#484848;left:412.80px;letter-spacing:-0.224px;">png</div>
<div style="top:192.66px;color:#484848;left:485.00px;letter-spacing:-0.230px;" class="u">result_f268510.css</div>
<div style="top:192.66px;color:#484848;right:189.50px;letter-spacing:-0.345px;">1.8 kB</div>
<div style="top:192.66px;color:#484848;right:115.00px;letter-spacing:-0.279px;">117 ms</div>
<div style="top:192.66px;color:#484848;left:754.20px;letter-spacing:-0.342px;">60538</div>
<div style="top:204.08px;color:#484848;left:32.00px;letter-spacing:-0.235px;">AvTypeFilterView_cea6b92.css</div>
<div style="top:204.08px;color:#484848;left:266.00px;letter-spacing:-0.167px;">304</div>
<div style="top:204.08px;color:#484848;left:339.90px;letter-spacing:0.023px;">http/1.1</div>
<div style="top:204.08px;color:#484848;left:412.80px;letter-spacing:-0.202px;">stylesheet</div>
<div style="top:204.08px;color:#484848;left:485.00px;letter-spacing:0.034px;" class="u">index?tn=baiduimage&amp;ipn=r&amp;ct=201...</div>
<div style="top:204.08px;color:#484848;right:189.50px;letter-spacing:-0.457px;">695 B</div>
<div style="top:204.08px;color:#484848;right:115.00px;letter-spacing:-0.283px;">77 ms</div>
<div style="top:204.08px;color:#484848;left:754.20px;letter-spacing:-0.342px;">60544</div>
<div style="top:215.50px;color:#484848;left:32.00px;letter-spacing:-0.319px;">base_a66ce51.js</div>
<div style="top:215.50px;color:#484848;left:266.00px;letter-spacing:-0.167px;">304</div>
<div style="top:215.50px;color:#484848;left:339.90px;letter-spacing:0.023px;">http/1.1</div>
<div style="top:215.50px;color:#484848;left:412.80px;letter-spacing:-0.114px;">script</div>
<div style="top:215.50px;color:#484848;left:485.00px;letter-spacing:0.034px;" class="u">index?tn=baiduimage&amp;ipn=r&amp;ct=201...</div>
<div style="top:215.50px;color:#484848;right:189.50px;letter-spacing:-0.457px;">710 B</div>
<div style="top:215.50px;color:#484848;right:115.00px;letter-spacing:-0.283px;">45 ms</div>
<div style="top:215.50px;color:#484848;left:754.20px;letter-spacing:-0.342px;">60544</div>
<div style="top:226.92px;color:#484848;left:32.00px;letter-spacing:-0.129px;">durationStat_d292e9f.js</div>
<div style="top:226.92px;color:#484848;left:266.00px;letter-spacing:-0.167px;">304</div>
<div style="top:226.92px;color:#484848;left:339.90px;letter-spacing:0.023px;">http/1.1</div>
<div style="top:226.92px;color:#484848;left:412.80px;letter-spacing:-0.114px;">script</div>
<div style="top:226.92px;color:#484848;left:485.00px;letter-spacing:-0.179px;" class="u">mod_6f6741d.js:1</div>
<div style="top:226.92px;color:#484848;right:189.50px;letter-spacing:-0.457px;">710 B</div>
<div style="top:226.92px;color:#484848;right:115.00px;letter-spacing:-0.283px;">97 ms</div>
<div style="top:226.92px;color:#484848;left:754.20px;letter-spacing:-0.342px;">60544</div>
<div style="top:238.34px;color:#484848;left:32.00px;letter-spacing:0.006px;">iconfont-8db5f471f4.woff2</div>
<div style="top:238.34px;color:#9a9a9a;left:266.00px;letter-spacing:-0.167px;">200</div>
<div style="top:238.34px;color:#484848;left:339.90px;letter-spacing:-0.277px;">h2</div>
<div style="top:238.34px;color:#484848;left:412.80px;letter-spacing:-0.039px;">font</div>
<div style="top:238.34px;color:#484848;left:485.00px;letter-spacing:-0.303px;" class="u">co_36495cb.css</div>
<div style="top:238.34px;color:#9a9a9a;right:189.50px;letter-spacing:-0.179px;">(memory cache)</div>
<div style="top:238.34px;color:#484848;right:115.00px;letter-spacing:-0.280px;">0 ms</div>
<div style="top:238.34px;color:#484848;left:754.20px;letter-spacing:-0.342px;">60681</div>
<div style="top:249.76px;color:#fff;left:32.00px;letter-spacing:-0.024px;">u=3433901559,98614534&amp;fm=26&amp;gp=0.jpg</div>
<div style="top:249.76px;color:#fff;left:266.00px;letter-spacing:-0.167px;">200</div>
<div style="top:249.76px;color:#fff;left:339.90px;letter-spacing:-0.277px;">h2</div>
<div style="top:249.76px;color:#fff;left:412.80px;letter-spacing:-0.114px;">jpeg</div>
<div style="top:249.76px;color:#fff;left:485.00px;letter-spacing:-0.303px;" class="u s">base_a66ce51.js:3</div>
<div style="top:249.76px;color:#fff;right:189.50px;letter-spacing:-0.179px;">(memory cache)</div>
<div style="top:249.76px;color:#fff;right:115.00px;letter-spacing:-0.280px;">0 ms</div>
<div style="top:249.76px;color:#fff;left:754.20px;letter-spacing:-0.342px;">60831</div>
<div style="top:261.18px;color:#484848;left:32.00px;letter-spacing:-0.037px;">u=2299906247,2491309146&amp;fm=26&amp;gp=0.jpg</div>
<div style="top:261.18px;color:#9a9a9a;left:266.00px;letter-spacing:-0.167px;">200</div>
<div style="top:261.18px;color:#484848;left:339.90px;letter-spacing:-0.277px;">h2</div>
<div style="top:261.18px;color:#484848;left:412.80px;letter-spacing:-0.114px;">jpeg</div>
<div style="top:261.18px;color:#484848;left:485.00px;letter-spacing:-0.303px;" class="u">base_a66ce51.js:3</div>
<div style="top:261.18px;color:#9a9a9a;right:189.50px;letter-spacing:-0.179px;">(memory cache)</div>
<div style="top:261.18px;color:#484848;right:115.00px;letter-spacing:-0.280px;">0 ms</div>
<div style="top:261.18px;color:#484848;left:754.20px;letter-spacing:-0.342px;">60831</div>
<div style="top:272.60px;color:#484848;left:32.00px;letter-spacing:-0.037px;">u=2518024180,2185488995&amp;fm=26&amp;gp=0.jpg</div>
<div style="top:272.60px;color:#9a9a9a;left:266.00px;letter-spacing:-0.167px;">200</div>
<div style="top:272.60px;color:#484848;left:339.90px;letter-spacing:-0.277px;">h2</div>
<div style="top:272.60px;color:#484848;left:412.80px;letter-spacing:-0.114px;">jpeg</div>
<div style="top:272.60px;color:#484848;left:485.00px;letter-spacing:-0.303px;" class="u">base_a66ce51.js:3</div>
<div style="top:272.60px;color:#9a9a9a;right:189.50px;letter-spacing:-0.179px;">(memory cache)</div>
<div style="top:272.60px;color:#484848;right:115.00px;letter-spacing:-0.280px;">0 ms</div>
<div style="top:272.60px;color:#484848;left:754.20px;letter-spacing:-0.342px;">60831</div>
<div style="top:284.02px;color:#484848;left:32.00px;letter-spacing:-0.037px;">u=4048529501,3101653024&amp;fm=26&amp;gp=0.jpg</div>
<div style="top:284.02px;color:#9a9a9a;left:266.00px;letter-spacing:-0.167px;">200</div>
<div style="top:284.02px;color:#484848;left:339.90px;letter-spacing:-0.277px;">h2</div>
<div style="top:284.02px;color:#484848;left:412.80px;letter-spacing:-0.114px;">jpeg</div>
<div style="top:284.02px;color:#484848;left:485.00px;letter-spacing:-0.303px;" class="u">base_a66ce51.js:3</div>
<div style="top:284.02px;color:#9a9a9a;right:189.50px;letter-spacing:-0.179px;">(memory cache)</div>
<div style="top:284.02px;color:#484848;right:115.00px;letter-spacing:-0.280px;">0 ms</div>
<div style="top:284.02px;color:#484848;left:754.20px;letter-spacing:-0.342px;">60831</div>
<div style="top:295.44px;color:#484848;left:32.00px;letter-spacing:-0.037px;">u=2048148093,4286364404&amp;fm=26&amp;gp=0.jpg</div>
<div style="top:295.44px;color:#9a9a9a;left:266.00px;letter-spacing:-0.167px;">200</div>
<div style="top:295.44px;color:#484848;left:339.90px;letter-spacing:-0.277px;">h2</div>
<div style="top:295.44px;color:#484848;left:412.80px;letter-spacing:-0.114px;">jpeg</div>
<div style="top:295.44px;color:#484848;left:485.00px;letter-spacing:-0.303px;" class="u">base_a66ce51.js:3</div>
<div style="top:295.44px;color:#9a9a9a;right:189.50px;letter-spacing:-0.179px;">(memory cache)</div>
<div style="top:295.44px;color:#484848;right:115.00px;letter-spacing:-0.280px;">0 ms</div>
<div style="top:295.44px;color:#484848;left:754.20px;letter-spacing:-0.342px;">60831</div>
<div style="top:306.86px;color:#484848;left:32.00px;letter-spacing:-0.037px;">u=3045503261,2102474148&amp;fm=26&amp;gp=0.jpg</div>
<div style="top:306.86px;color:#9a9a9a;left:266.00px;letter-spacing:-0.167px;">200</div>
<div style="top:306.86px;color:#484848;left:339.90px;letter-spacing:-0.277px;">h2</div>
<div style="top:306.86px;color:#484848;left:412.80px;letter-spacing:-0.114px;">jpeg</div>
<div style="top:306.86px;color:#484848;left:485.00px;letter-spacing:-0.303px;" class="u">base_a66ce51.js:3</div>
<div style="top:306.86px;color:#9a9a9a;right:189.50px;letter-spacing:-0.179px;">(memory cache)</div>
<div style="top:306.86px;color:#484848;right:115.00px;letter-spacing:-0.280px;">1 ms</div>
<div style="top:306.86px;color:#484848;left:754.20px;letter-spacing:-0.342px;">60831</div>
<div style="top:318.28px;color:#484848;left:32.00px;letter-spacing:-0.037px;">u=2814592898,3329399291&amp;fm=26&amp;gp=0.jpg</div>
<div style="top:318.28px;color:#9a9a9a;left:266.00px;letter-spacing:-0.167px;">200</div>
<div style="top:318.28px;color:#484848;left:339.90px;letter-spacing:-0.277px;">h2</div>
<div style="top:318.28px;color:#484848;left:412.80px;letter-spacing:-0.114px;">jpeg</div>
<div style="top:318.28px;color:#484848;left:485.00px;letter-spacing:-0.303px;" class="u">base_a66ce51.js:3</div>
<div style="top:318.28px;color:#9a9a9a;right:189.50px;letter-spacing:-0.179px;">(memory cache)</div>
<div style="top:318.28px;color:#484848;right:115.00px;letter-spacing:-0.280px;">0 ms</div>
<div style="top:318.28px;color:#484848;left:754.20px;letter-spacing:-0.342px;">60832</div>
<div style="top:329.70px;color:#484848;left:32.00px;letter-spacing:-0.037px;">u=4095185369,1934999444&amp;fm=26&amp;gp=0.jpg</div>
<div style="top:329.70px;color:#9a9a9a;left:266.00px;letter-spacing:-0.167px;">200</div>
<div style="top:329.70px;color:#484848;left:339.90px;letter-spacing:-0.277px;">h2</div>
<div style="top:329.70px;color:#484848;left:412.80px;letter-spacing:-0.114px;">jpeg</div>
<div style="top:329.70px;color:#484848;left:485.00px;letter-spacing:-0.303px;" class="u">base_a66ce51.js:3</div>
<div style="top:329.70px;color:#9a9a9a;right:189.50px;letter-spacing:-0.179px;">(memory cache)</div>
<div style="top:329.70px;color:#484848;right:115.00px;letter-spacing:-0.280px;">0 ms</div>
<div style="top:329.70px;color:#484848;left:754.20px;letter-spacing:-0.342px;">60832</div>
<div style="top:341.12px;color:#484848;left:32.00px;letter-spacing:-0.041px;">u=3403564725,444856578&amp;fm=26&amp;gp=0.jpg</div>
<div style="top:341.12px;color:#9a9a9a;left:266.00px;letter-spacing:-0.167px;">200</div>
<div style="top:341.12px;color:#484848;left:339.90px;letter-spacing:-0.277px;">h2</div>
<div style="top:341.12px;color:#484848;left:412.80px;letter-spacing:-0.114px;">jpeg</div>
<div style="top:341.12px;color:#484848;left:485.00px;letter-spacing:-0.303px;" class="u">base_a66ce51.js:3</div>
<div style="top:341.12px;color:#9a9a9a;right:189.50px;letter-spacing:-0.179px;">(memory cache)</div>
<div style="top:341.12px;color:#484848;right:115.00px;letter-spacing:-0.280px;">0 ms</div>
<div style="top:341.12px;color:#484848;left:754.20px;letter-spacing:-0.342px;">60832</div>
<div style="top:352.54px;color:#484848;left:32.00px;letter-spacing:-0.024px;">u=1123039593,3865169326&amp;fm=26&amp;gp=0.jpg</div>
<div style="top:352.54px;color:#9a9a9a;left:266.00px;letter-spacing:-0.167px;">200</div>
<div style="top:352.54px;color:#484848;left:339.90px;letter-spacing:-0.277px;">h2</div>
<div style="top:352.54px;color:#484848;left:412.80px;letter-spacing:-0.114px;">jpeg</div>
<div style="top:352.54px;color:#484848;left:485.00px;letter-spacing:-0.303px;" class="u">base_a66ce51.js:3</div>
<div style="top:352.54px;color:#9a9a9a;right:189.50px;letter-spacing:-0.179px;">(memory cache)</div>
<div style="top:352.54px;color:#484848;right:115.00px;letter-spacing:-0.280px;">0 ms</div>
<div style="top:352.54px;color:#484848;left:754.20px;letter-spacing:-0.342px;">60832</div>
<div style="top:363.96px;color:#484848;left:32.00px;letter-spacing:-0.037px;">u=2860316935,2538300066&amp;fm=26&amp;gp=0.jpg</div>
<div style="top:363.96px;color:#9a9a9a;left:266.00px;letter-spacing:-0.167px;">200</div>
<div style="top:363.96px;color:#484848;left:339.90px;letter-spacing:-0.277px;">h2</div>
<div style="top:363.96px;color:#484848;left:412.80px;letter-spacing:-0.114px;">jpeg</div>
<div style="top:363.96px;color:#484848;left:485.00px;letter-spacing:-0.303px;" class="u">base_a66ce51.js:3</div>
<div style="top:363.96px;color:#9a9a9a;right:189.50px;letter-spacing:-0.179px;">(memory cache)</div>
<div style="top:363.96px;color:#484848;right:115.00px;letter-spacing:-0.280px;">0 ms</div>
<div style="top:363.96px;color:#484848;left:754.20px;letter-spacing:-0.342px;">60832</div>
<div style="top:375.38px;color:#484848;left:32.00px;letter-spacing:-0.037px;">u=2387063372,3229197203&amp;fm=26&amp;gp=0.jpg</div>
<div style="top:375.38px;color:#9a9a9a;left:266.00px;letter-spacing:-0.167px;">200</div>
<div style="top:375.38px;color:#484848;left:339.90px;letter-spacing:-0.277px;">h2</div>
<div style="top:375.38px;color:#484848;left:412.80px;letter-spacing:-0.114px;">jpeg</div>
<div style="top:375.38px;color:#484848;left:485.00px;letter-spacing:-0.303px;" class="u">base_a66ce51.js:3</div>
<div style="top:375.38px;color:#9a9a9a;right:189.50px;letter-spacing:-0.179px;">(memory cache)</div>
<div style="top:375.38px;color:#484848;right:115.00px;letter-spacing:-0.280px;">0 ms</div>
<div style="top:375.38px;color:#484848;left:754.20px;letter-spacing:-0.342px;">60832</div>
<div style="top:386.80px;color:#484848;left:32.00px;letter-spacing:-0.027px;">u=2116055658,606382341&amp;fm=26&amp;gp=0.jpg</div>
<div style="top:386.80px;color:#9a9a9a;left:266.00px;letter-spacing:-0.167px;">200</div>
<div style="top:386.80px;color:#484848;left:339.90px;letter-spacing:-0.277px;">h2</div>
<div style="top:386.80px;color:#484848;left:412.80px;letter-spacing:-0.114px;">jpeg</div>
<div style="top:386.80px;color:#484848;left:485.00px;letter-spacing:-0.303px;" class="u">base_a66ce51.js:3</div>
<div style="top:386.80px;color:#9a9a9a;right:189.50px;letter-spacing:-0.179px;">(memory cache)</div>
<div style="top:386.80px;color:#484848;right:115.00px;letter-spacing:-0.280px;">1 ms</div>
<div style="top:386.80px;color:#484848;left:754.20px;letter-spacing:-0.342px;">60832</div>
<div style="top:398.22px;color:#484848;left:32.00px;letter-spacing:-0.027px;">u=2581197336,839822256&amp;fm=26&amp;gp=0.jpg</div>
<div style="top:398.22px;color:#9a9a9a;left:266.00px;letter-spacing:-0.167px;">200</div>
<div style="top:398.22px;color:#484848;left:339.90px;letter-spacing:-0.277px;">h2</div>
<div style="top:398.22px;color:#484848;left:412.80px;letter-spacing:-0.114px;">jpeg</div>
<div style="top:398.22px;color:#484848;left:485.00px;letter-spacing:-0.303px;" class="u">base_a66ce51.js:3</div>
<div style="top:398.22px;color:#9a9a9a;right:189.50px;letter-spacing:-0.179px;">(memory cache)</div>
<div style="top:398.22px;color:#484848;right:115.00px;letter-spacing:-0.280px;">0 ms</div>
<div style="top:398.22px;color:#484848;left:754.20px;letter-spacing:-0.342px;">60838</div>
<div style="top:409.64px;color:#484848;left:32.00px;letter-spacing:-0.037px;">u=1031776168,2091974292&amp;fm=26&amp;gp=0.jpg</div>
<div style="top:409.64px;color:#9a9a9a;left:266.00px;letter-spacing:-0.167px;">200</div>
<div style="top:409.64px;color:#484848;left:339.90px;letter-spacing:-0.277px;">h2</div>
<div style="top:409.64px;color:#484848;left:412.80px;letter-spacing:-0.114px;">jpeg</div>
<div style="top:409.64px;color:#484848;left:485.00px;letter-spacing:-0.303px;" class="u">base_a66ce51.js:3</div>
<div style="top:409.64px;color:#9a9a9a;right:189.50px;letter-spacing:-0.179px;">(memory cache)</div>
<div style="top:409.64px;color:#484848;right:115.00px;letter-spacing:-0.280px;">0 ms</div>
<div style="top:409.64px;color:#484848;left:754.20px;letter-spacing:-0.342px;">60838</div>
<div style="top:421.06px;color:#484848;left:32.00px;letter-spacing:-0.024px;">u=1492340814,4084796746&amp;fm=11&amp;gp=0.jpg</div>
<div style="top:421.06px;color:#9a9a9a;left:266.00px;letter-spacing:-0.167px;">200</div>
<div style="top:421.06px;color:#484848;left:339.90px;letter-spacing:-0.277px;">h2</div>
<div style="top:421.06px;color:#484848;left:412.80px;letter-spacing:-0.114px;">jpeg</div>
<div style="top:421.06px;color:#484848;left:485.00px;letter-spacing:-0.303px;" class="u">base_a66ce51.js:3</div>
<div style="top:421.06px;color:#9a9a9a;right:189.50px;letter-spacing:-0.179px;">(memory cache)</div>
<div style="top:421.06px;color:#484848;right:115.00px;letter-spacing:-0.280px;">0 ms</div>
<div style="top:421.06px;color:#484848;left:754.20px;letter-spacing:-0.342px;">60838</div>
<div style="top:432.48px;color:#484848;left:32.00px;letter-spacing:-0.037px;">u=3834021281,4217428187&amp;fm=26&amp;gp=0.jpg</div>
<div style="top:432.48px;color:#9a9a9a;left:266.00px;letter-spacing:-0.167px;">200</div>
<div style="top:432.48px;color:#484848;left:339.90px;letter-spacing:-0.277px;">h2</div>
<div style="top:432.48px;color:#484848;left:412.80px;letter-spacing:-0.114px;">jpeg</div>
<div style="top:432.48px;color:#484848;left:485.00px;letter-spacing:-0.303px;" class="u">base_a66ce51.js:3</div>
<div style="top:432.48px;color:#9a9a9a;right:189.50px;letter-spacing:-0.179px;">(memory cache)</div>
<div style="top:432.48px;color:#484848;right:115.00px;letter-spacing:-0.280px;">0 ms</div>
<div style="top:432.48px;color:#484848;left:754.20px;letter-spacing:-0.342px;">60838</div>
<div style="top:443.90px;color:#484848;left:32.00px;letter-spacing:-0.037px;">u=1319410129,2054067287&amp;fm=26&amp;gp=0.jpg</div>
<div style="top:443.90px;color:#9a9a9a;left:266.00px;letter-spacing:-0.167px;">200</div>
<div style="top:443.90px;color:#484848;left:339.90px;letter-spacing:-0.277px;">h2</div>
<div style="top:443.90px;color:#484848;left:412.80px;letter-spacing:-0.114px;">jpeg</div>
<div style="top:443.90px;color:#484848;left:485.00px;letter-spacing:-0.303px;" class="u">base_a66ce51.js:3</div>
<div style="top:443.90px;color:#9a9a9a;right:189.50px;letter-spacing:-0.179px;">(memory cache)</div>
<div style="top:443.90px;color:#484848;right:115.00px;letter-spacing:-0.280px;">1 ms</div>
<div style="top:443.90px;color:#484848;left:754.20px;letter-spacing:-0.342px;">60838</div>
<div style="top:455.32px;color:#484848;left:32.00px;letter-spacing:-0.027px;">u=4190494077,671103587&amp;fm=26&amp;gp=0.jpg</div>
<div style="top:455.32px;color:#9a9a9a;left:266.00px;letter-spacing:-0.167px;">200</div>
<div style="top:455.32px;color:#484848;left:339.90px;letter-spacing:-0.277px;">h2</div>
<div style="top:455.32px;color:#484848;left:412.80px;letter-spacing:-0.114px;">jpeg</div>
<div style="top:455.32px;color:#484848;left:485.00px;letter-spacing:-0.303px;" class="u">base_a66ce51.js:3</div>
<div style="top:455.32px;color:#9a9a9a;right:189.50px;letter-spacing:-0.179px;">(memory cache)</div>
<div style="top:455.32px;color:#484848;right:115.00px;letter-spacing:-0.280px;">1 ms</div>
<div style="top:455.32px;color:#484848;left:754.20px;letter-spacing:-0.342px;">60838</div>
<div style="top:466.74px;color:#484848;left:32.00px;letter-spacing:-0.071px;">3.gif?format=$contsign$objurl$partnerId&amp;cs=7690203...d=114603675975982...</div>
<div style="top:466.74px;color:#484848;left:266.00px;letter-spacing:-0.167px;">200</div>
<div style="top:466.74px;color:#484848;left:339.90px;letter-spacing:0.023px;">http/1.1</div>
<div style="top:466.74px;color:#484848;left:412.80px;letter-spacing:-0.059px;">gif</div>
<div style="top:466.74px;color:#484848;left:485.00px;letter-spacing:-0.248px;" class="u">cores_63306cb.js:18</div>
<div style="top:466.74px;color:#484848;right:189.50px;letter-spacing:-0.457px;">243 B</div>
<div style="top:466.74px;color:#484848;right:115.00px;letter-spacing:-0.281px;">107 ms</div>
<div style="top:466.74px;color:#484848;left:754.20px;letter-spacing:-0.342px;">60846</div>
<div style="top:478.16px;color:#484848;left:32.00px;letter-spacing:-0.037px;">u=2835525202,3155050394&amp;fm=26&amp;gp=0.jpg</div>
<div style="top:478.16px;color:#9a9a9a;left:266.00px;letter-spacing:-0.167px;">200</div>
<div style="top:478.16px;color:#484848;left:339.90px;letter-spacing:-0.277px;">h2</div>
<div style="top:478.16px;color:#484848;left:412.80px;letter-spacing:-0.114px;">jpeg</div>
<div style="top:478.16px;color:#484848;left:485.00px;letter-spacing:-0.303px;" class="u">base_a66ce51.js:3</div>
<div style="top:478.16px;color:#9a9a9a;right:189.50px;letter-spacing:-0.179px;">(memory cache)</div>
<div style="top:478.16px;color:#484848;right:115.00px;letter-spacing:-0.280px;">1 ms</div>
<div style="top:478.16px;color:#484848;left:754.20px;letter-spacing:-0.342px;">60850</div>
<div style="top:489.58px;color:#484848;left:32.00px;letter-spacing:-0.127px;">9.gif?_dev=pc&amp;samplekey=&amp;interval=3&amp;page=result&amp;si...94%E6%92%AD%E...</div>
<div style="top:489.58px;color:#484848;left:266.00px;letter-spacing:-0.167px;">200</div>
<div style="top:489.58px;color:#484848;left:339.90px;letter-spacing:0.023px;">http/1.1</div>
<div style="top:489.58px;color:#484848;left:412.80px;letter-spacing:-0.059px;">gif</div>
<div style="top:489.58px;color:#484848;left:485.00px;letter-spacing:-0.145px;" class="u">durationStat_d292e9f.js:1</div>
<div style="top:489.58px;color:#484848;right:189.50px;letter-spacing:-0.457px;">243 B</div>
<div style="top:489.58px;color:#484848;right:115.00px;letter-spacing:-0.281px;">176 ms</div>
<div style="top:489.58px;color:#484848;left:754.20px;letter-spacing:-0.342px;">62019</div>
<div style="top:501.00px;color:#484848;left:32.00px;letter-spacing:-0.141px;">9.gif?_dev=pc&amp;samplekey=&amp;interval=0.43&amp;page=result...94%E6%92%AD%E...</div>
<div style="top:501.00px;color:#484848;left:266.00px;letter-spacing:-0.167px;">200</div>
<div style="top:501.00px;color:#484848;left:339.90px;letter-spacing:0.023px;">http/1.1</div>
<div style="top:501.00px;color:#484848;left:412.80px;letter-spacing:-0.059px;">gif</div>
<div style="top:501.00px;color:#484848;left:485.00px;letter-spacing:-0.145px;" class="u">durationStat_d292e9f.js:1</div>
<div style="top:501.00px;color:#484848;right:189.50px;letter-spacing:-0.457px;">243 B</div>
<div style="top:501.00px;color:#484848;right:115.00px;letter-spacing:-0.283px;">56 ms</div>
<div style="top:501.00px;color:#484848;left:754.20px;letter-spacing:-0.342px;">62019</div>
<div style="top:512.42px;color:#484848;left:32.00px;letter-spacing:-0.127px;">9.gif?_dev=pc&amp;samplekey=&amp;interval=3&amp;page=result&amp;si...94%E6%92%AD%E...</div>
<div style="top:512.42px;color:#484848;left:266.00px;letter-spacing:-0.167px;">200</div>
<div style="top:512.42px;color:#484848;left:339.90px;letter-spacing:0.023px;">http/1.1</div>
<div style="top:512.42px;color:#484848;left:412.80px;letter-spacing:-0.059px;">gif</div>
<div style="top:512.42px;color:#484848;left:485.00px;letter-spacing:-0.145px;" class="u">durationStat_d292e9f.js:1</div>
<div style="top:512.42px;color:#484848;right:189.50px;letter-spacing:-0.457px;">243 B</div>
<div style="top:512.42px;color:#484848;right:115.00px;letter-spacing:-0.281px;">237 ms</div>
<div style="top:512.42px;color:#484848;left:754.20px;letter-spacing:-0.342px;">66742</div>
<div style="top:523.84px;color:#484848;left:32.00px;letter-spacing:-0.127px;">9.gif?_dev=pc&amp;samplekey=&amp;interval=6&amp;page=result&amp;si...94%E6%92%AD%E...</div>
<div style="top:523.84px;color:#484848;left:266.00px;letter-spacing:-0.167px;">200</div>
<div style="top:523.84px;color:#484848;left:339.90px;letter-spacing:0.023px;">http/1.1</div>
<div style="top:523.84px;color:#484848;left:412.80px;letter-spacing:-0.059px;">gif</div>
<div style="top:523.84px;color:#484848;left:485.00px;letter-spacing:-0.145px;" class="u">durationStat_d292e9f.js:1</div>
<div style="top:523.84px;color:#484848;right:189.50px;letter-spacing:-0.457px;">243 B</div>
<div style="top:523.84px;color:#484848;right:115.00px;letter-spacing:-0.283px;">50 ms</div>
<div style="top:523.84px;color:#484848;left:754.20px;letter-spacing:-0.342px;">66742</div>
<div style="top:535.26px;color:#484848;left:32.00px;letter-spacing:-0.127px;">9.gif?_dev=pc&amp;samplekey=&amp;interval=9&amp;page=result&amp;si...94%E6%92%AD%E...</div>
<div style="top:535.26px;color:#484848;left:266.00px;letter-spacing:-0.167px;">200</div>
<div style="top:535.26px;color:#484848;left:339.90px;letter-spacing:0.023px;">http/1.1</div>
<div style="top:535.26px;color:#484848;left:412.80px;letter-spacing:-0.059px;">gif</div>
<div style="top:535.26px;color:#484848;left:485.00px;letter-spacing:-0.145px;" class="u">durationStat_d292e9f.js:1</div>
<div style="top:535.26px;color:#484848;right:189.50px;letter-spacing:-0.457px;">243 B</div>
<div style="top:535.26px;color:#484848;right:115.00px;letter-spacing:-0.283px;">52 ms</div>
<div style="top:535.26px;color:#484848;left:754.20px;letter-spacing:-0.342px;">66742</div>
<div style="top:546.68px;color:#484848;left:32.00px;letter-spacing:-0.110px;">9.gif?_dev=pc&amp;samplekey=&amp;interval=15&amp;page=result&amp;s...94%E6%92%AD%...</div>
<div style="top:546.68px;color:#484848;left:266.00px;letter-spacing:-0.167px;">200</div>
<div style="top:546.68px;color:#484848;left:339.90px;letter-spacing:0.023px;">http/1.1</div>
<div style="top:546.68px;color:#484848;left:412.80px;letter-spacing:-0.059px;">gif</div>
<div style="top:546.68px;color:#484848;left:485.00px;letter-spacing:-0.145px;" class="u">durationStat_d292e9f.js:1</div>
<div style="top:546.68px;color:#484848;right:189.50px;letter-spacing:-0.457px;">243 B</div>
<div style="top:546.68px;color:#484848;right:115.00px;letter-spacing:-0.283px;">65 ms</div>
<div style="top:546.68px;color:#484848;left:754.20px;letter-spacing:-0.342px;">66742</div>
<div style="top:558.10px;color:#484848;left:32.00px;letter-spacing:-0.110px;">9.gif?_dev=pc&amp;samplekey=&amp;interval=24&amp;page=result&amp;s...94%E6%92%AD%...</div>
<div style="top:558.10px;color:#484848;left:266.00px;letter-spacing:-0.167px;">200</div>
<div style="top:558.10px;color:#484848;left:339.90px;letter-spacing:0.023px;">http/1.1</div>
<div style="top:558.10px;color:#484848;left:412.80px;letter-spacing:-0.059px;">gif</div>
<div style="top:558.10px;color:#484848;left:485.00px;letter-spacing:-0.145px;" class="u">durationStat_d292e9f.js:1</div>
<div style="top:558.10px;color:#484848;right:189.50px;letter-spacing:-0.457px;">243 B</div>
<div style="top:558.10px;color:#484848;right:115.00px;letter-spacing:-0.283px;">85 ms</div>
<div style="top:558.10px;color:#484848;left:754.20px;letter-spacing:-0.342px;">66742</div>
<div style="top:569.52px;color:#484848;left:32.00px;letter-spacing:-0.076px;">3.gif?format=$contsign$objurl$partnerId&amp;cs=7690203...0367597598296745&amp;...</div>
<div style="top:569.52px;color:#484848;left:266.00px;letter-spacing:-0.167px;">200</div>
<div style="top:569.52px;color:#484848;left:339.90px;letter-spacing:0.023px;">http/1.1</div>
<div style="top:569.52px;color:#484848;left:412.80px;letter-spacing:-0.059px;">gif</div>
<div style="top:569.52px;color:#484848;left:485.00px;letter-spacing:-0.248px;" class="u">cores_63306cb.js:18</div>
<div style="top:569.52px;color:#484848;right:189.50px;letter-spacing:-0.457px;">243 B</div>
<div style="top:569.52px;color:#484848;right:115.00px;letter-spacing:-0.281px;">195 ms</div>
<div style="top:569.52px;color:#484848;left:754.20px;letter-spacing:-0.342px;">66742</div>
</div></body></html>
